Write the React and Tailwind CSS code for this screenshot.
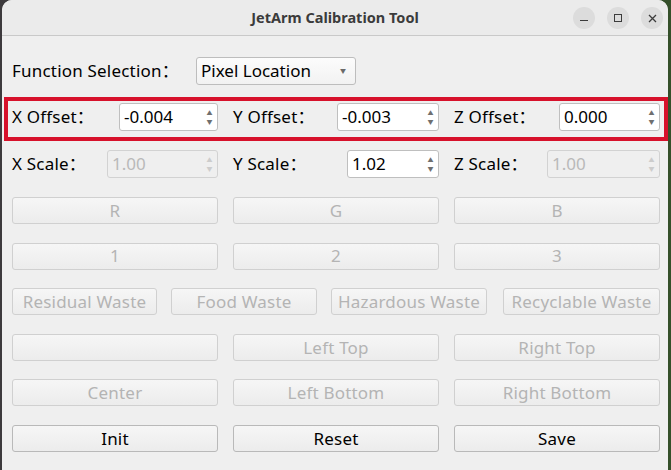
import React from "react";

const font = { fontFamily: '"Noto Sans", "Noto Sans CJK SC", sans-serif' };

function SpinBox({ value, width, disabled }) {
    return (
        <div className={`${width} h-[28px] flex border rounded-[3px] ${disabled ? 'bg-[#efefef] border-[#d2d2d2] text-[#b9b9b9]' : 'bg-white border-[#bfbfbf] text-black'}`}>
            <div className="flex-1 flex items-center pl-[4px] text-[17px]">{value}</div>
            <div className={`w-[15px] flex flex-col items-center justify-center gap-[3px] text-[6px] leading-none ${disabled ? 'text-[#cccccc]' : 'text-[#6f6f6f]'}`}>
                <span>▲</span>
                <span>▼</span>
            </div>
        </div>
    )
}

function Button({ label, disabled, className = '' }) {
    return (
        <div className={`h-[27px] flex items-center justify-center rounded-[3px] border bg-gradient-to-b from-[#f6f6f6] to-[#ececec] text-[17px] tracking-[0.2px] ${disabled ? 'border-[#d0d0d0] text-[#b4b4b4]' : 'border-[#b9b9b9] text-black'} ${className}`}>
            {label}
        </div>
    )
}

function Field({ label, children }) {
    return (
        <div className="flex items-center justify-between">
            <span className="text-[17px] tracking-[0.2px] text-black">{label}</span>
            {children}
        </div>
    )
}

export default function App() {
    return (
        <div className="w-[671px] h-[470px] overflow-hidden bg-gradient-to-r from-[#3d3a3d] via-[#2f2f2f] to-[#35502a]" style={font}>
            <div className="ml-[2px] mr-[3px] h-[470px] rounded-t-[10px] bg-[#efefef] flex flex-col">
                {/* title bar */}
                <div className="h-[36px] shrink-0 relative flex items-center justify-center rounded-t-[10px] bg-[#ebebeb] border-b border-[#c9c9c9]">
                    <span className="text-[14.5px] font-bold text-[#3b3b3b]">JetArm Calibration Tool</span>
                    <div className="absolute right-[5px] top-[7px] flex gap-[12px]">
                        <div className="w-[22px] h-[22px] rounded-full bg-[#dcdcdc] flex items-center justify-center">
                            <div className="w-[8px] h-[1.5px] bg-[#3b3b3b] mt-[5px]" />
                        </div>
                        <div className="w-[22px] h-[22px] rounded-full bg-[#dcdcdc] flex items-center justify-center">
                            <div className="w-[8px] h-[8px] border border-[#3b3b3b]" />
                        </div>
                        <div className="w-[22px] h-[22px] rounded-full bg-[#dcdcdc] flex items-center justify-center">
                            <svg width="9" height="9" viewBox="0 0 9 9" stroke="#3b3b3b" strokeWidth="1.3">
                                <path d="M1 1L8 8M8 1L1 8" />
                            </svg>
                        </div>
                    </div>
                </div>

                <div className="pl-[10px] pr-[8px] pt-[21px] flex flex-col">
                    {/* function selection */}
                    <div className="flex items-center h-[28px]">
                        <span className="text-[17px] tracking-[0.2px] text-black w-[184px]">Function Selection：</span>
                        <div className="w-[160px] h-[28px] flex items-center justify-between rounded-[3px] border border-[#bdbdbd] bg-gradient-to-b from-[#fcfcfc] to-[#f2f2f2] pl-[4px] pr-[9px] text-[17px] text-black">
                            <span>Pixel Location</span>
                            <span className="text-[6px] text-[#6a6a6a]">▼</span>
                        </div>
                    </div>

                    {/* offsets */}
                    <div className="relative mt-[18px] grid grid-cols-3 gap-x-[15px]">
                        <Field label="X Offset："><SpinBox value="-0.004" width="w-[99px]" /></Field>
                        <Field label="Y Offset："><SpinBox value="-0.003" width="w-[102px]" /></Field>
                        <Field label="Z Offset："><SpinBox value="0.000" width="w-[101px]" /></Field>
                        <div className="absolute left-[-8px] right-[-8px] top-[-6px] bottom-[-10px] border-[4px] border-[#d7112b] pointer-events-none" />
                    </div>

                    {/* scales */}
                    <div className="mt-[19px] grid grid-cols-3 gap-x-[15px]">
                        <Field label="X Scale："><SpinBox value="1.00" width="w-[111px]" disabled /></Field>
                        <Field label="Y Scale："><SpinBox value="1.02" width="w-[92px]" /></Field>
                        <Field label="Z Scale："><SpinBox value="1.00" width="w-[113px]" disabled /></Field>
                    </div>

                    {/* buttons */}
                    <div className="mt-[19px] flex flex-col gap-[18.6px]">
                        <div className="grid grid-cols-3 gap-x-[15px]">
                            <Button label="R" disabled />
                            <Button label="G" disabled />
                            <Button label="B" disabled />
                        </div>
                        <div className="grid grid-cols-3 gap-x-[15px]">
                            <Button label="1" disabled />
                            <Button label="2" disabled />
                            <Button label="3" disabled />
                        </div>
                        <div className="flex">
                            <Button label="Residual Waste" disabled className="w-[145px]" />
                            <Button label="Food Waste" disabled className="w-[146px] ml-[14px]" />
                            <Button label="Hazardous Waste" disabled className="w-[156px] ml-[14px]" />
                            <Button label="Recyclable Waste" disabled className="w-[157px] ml-[16px]" />
                        </div>
                        <div className="grid grid-cols-3 gap-x-[15px]">
                            <Button label="" disabled />
                            <Button label="Left Top" disabled />
                            <Button label="Right Top" disabled />
                        </div>
                        <div className="grid grid-cols-3 gap-x-[15px]">
                            <Button label="Center" disabled />
                            <Button label="Left Bottom" disabled />
                            <Button label="Right Bottom" disabled />
                        </div>
                        <div className="grid grid-cols-3 gap-x-[15px]">
                            <Button label="Init" />
                            <Button label="Reset" />
                            <Button label="Save" />
                        </div>
                    </div>
                </div>
            </div>
        </div>
    )
}
